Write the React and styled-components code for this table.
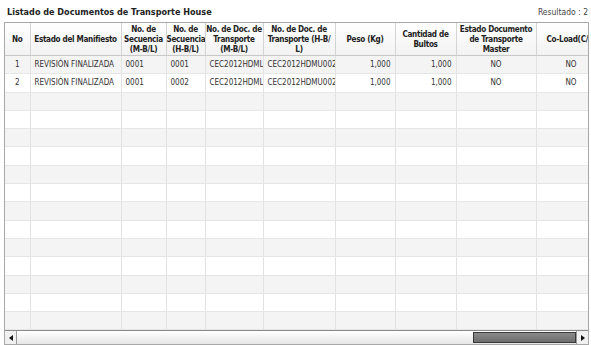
import React from 'react';
import styled, { createGlobalStyle } from 'styled-components';

const GlobalStyle = createGlobalStyle`
  html, body {
    margin: 0;
    padding: 0;
    background: #fff;
  }
  body {
    font-family: "DejaVu Sans Condensed", "DejaVu Sans", sans-serif;
    color: #333;
  }
`;

const columns = [
  { key: 'no', title: ['No'], width: 25, align: 'center' },
  { key: 'estado', title: ['Estado del Manifiesto'], width: 91, align: 'left' },
  { key: 'secM', title: ['No. de', 'Secuencia', '(M-B/L)'], width: 45, align: 'left' },
  { key: 'secH', title: ['No. de', 'Secuencia', '(H-B/L)'], width: 39, align: 'left' },
  { key: 'docM', title: ['No. de Doc. de', 'Transporte', '(M-B/L)'], width: 58, align: 'left' },
  { key: 'docH', title: ['No. de Doc. de', 'Transporte (H-B/', 'L)'], width: 72, align: 'left' },
  { key: 'peso', title: ['Peso (Kg)'], width: 60, align: 'right' },
  { key: 'bultos', title: ['Cantidad de', 'Bultos'], width: 61, align: 'right' },
  { key: 'master', title: ['Estado Documento', 'de Transporte', 'Master'], width: 80, align: 'center' },
  { key: 'coload', title: ['Co-Load(C/L)'], width: 70, align: 'center' },
];

const rows = [
  { no: '1', estado: 'REVISIÓN FINALIZADA', secM: '0001', secH: '0001', docM: 'CEC2012HDML', docH: 'CEC2012HDMU002', peso: '1,000', bultos: '1,000', master: 'NO', coload: 'NO' },
  { no: '2', estado: 'REVISIÓN FINALIZADA', secM: '0001', secH: '0002', docM: 'CEC2012HDML', docH: 'CEC2012HDMU002', peso: '1,000', bultos: '1,000', master: 'NO', coload: 'NO' },
];

const TOTAL_ROWS = 15;

const Page = styled.div`
  padding: 5px 3px 0 4px;
  width: 584px;
`;

const TitleBar = styled.div`
  display: flex;
  justify-content: space-between;
  align-items: center;
  height: 14px;
  padding: 0 0 3px 3px;
`;

const Title = styled.div`
  font-size: 9px;
  font-weight: bold;
  color: #222;
`;

const Result = styled.div`
  font-size: 8.5px;
  color: #444;
`;

const Frame = styled.div`
  border: 1px solid #a8a8a8;
  overflow: hidden;
  width: 583px;
`;

const Table = styled.table`
  border-collapse: collapse;
  table-layout: fixed;
  width: ${p => p.$width}px;
`;

const HeadCell = styled.th`
  height: 32px;
  padding: 0;
  font-size: 8.1px;
  line-height: 10px;
  letter-spacing: -0.3px;
  font-weight: bold;
  color: #222;
  text-align: center;
  background: linear-gradient(#ffffff, #f2f2f2);
  border-right: 1px solid #d4d4d4;
  border-bottom: 1px solid #c8c8c8;
  overflow: hidden;
`;

const HeadLine = styled.div`
  white-space: nowrap;
`;

const Row = styled.tr`
  height: 18.3px;
  background: ${p => (p.$odd ? '#f4f4f4' : '#ffffff')};
`;

const Cell = styled.td`
  padding: 0 4px;
  font-size: 8px;
  color: #333;
  text-align: ${p => p.$align};
  white-space: nowrap;
  overflow: hidden;
  text-overflow: clip;
  border-right: 1px solid #e2e2e2;
  border-bottom: 1px solid #e6e6e6;
`;

const ScrollBar = styled.div`
  display: flex;
  height: 13px;
  border-top: 1px solid #8a8a8a;
  background: linear-gradient(#ffffff, #e6e6e6);
`;

const ArrowButton = styled.div`
  width: 11px;
  display: flex;
  align-items: center;
  justify-content: center;
  background: #f0f0f0;
  border-right: ${p => (p.$left ? '1px solid #9a9a9a' : 'none')};
  border-left: ${p => (p.$left ? 'none' : '1px solid #9a9a9a')};
`;

const Arrow = styled.span`
  width: 0;
  height: 0;
  border-top: 3px solid transparent;
  border-bottom: 3px solid transparent;
  ${p => (p.$left ? 'border-right: 4px solid #111;' : 'border-left: 4px solid #111;')}
`;

const Track = styled.div`
  flex: 1;
  display: flex;
  justify-content: flex-end;
`;

const Thumb = styled.div`
  width: 101px;
  margin: 1px 0;
  background: linear-gradient(#8a8a8a, #6e6e6e);
  border: 1px solid #3a3a3a;
`;

export default function App() {
  const tableWidth = columns.reduce((s, c) => s + c.width, 0);
  const body = [];
  for (let i = 0; i < TOTAL_ROWS; i++) {
    const r = rows[i];
    body.push(
      <Row key={i} $odd={i % 2 === 0}>
        {columns.map(c => (
          <Cell key={c.key} $align={c.align}>
            {r ? r[c.key] : ''}
          </Cell>
        ))}
      </Row>
    );
  }

  return (
    <>
      <GlobalStyle />
      <Page>
        <TitleBar>
          <Title>Listado de Documentos de Transporte House</Title>
          <Result>Resultado : 2</Result>
        </TitleBar>
        <Frame>
          <Table $width={tableWidth}>
            <colgroup>
              {columns.map(c => (
                <col key={c.key} style={{ width: c.width }} />
              ))}
            </colgroup>
            <thead>
              <tr>
                {columns.map(c => (
                  <HeadCell key={c.key}>
                    {c.title.map(line => (
                      <HeadLine key={line}>{line}</HeadLine>
                    ))}
                  </HeadCell>
                ))}
              </tr>
            </thead>
            <tbody>{body}</tbody>
          </Table>
          <ScrollBar>
            <ArrowButton $left>
              <Arrow $left />
            </ArrowButton>
            <Track>
              <Thumb />
            </Track>
            <ArrowButton>
              <Arrow />
            </ArrowButton>
          </ScrollBar>
        </Frame>
      </Page>
    </>
  );
}
